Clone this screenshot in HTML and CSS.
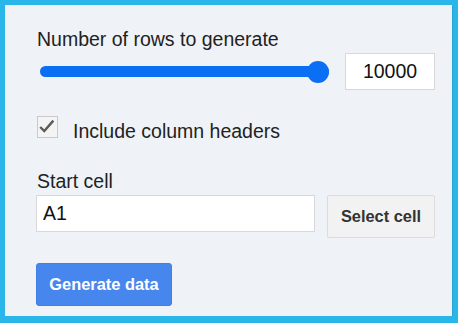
FILE: index.html
```html
<!DOCTYPE html>
<html lang="en">

<head>
  <meta charset="UTF-8">
  <meta name="viewport" content="width=device-width, initial-scale=1.0">
  <title>Generate data</title>
  <link rel="stylesheet" href="styles.css">
</head>

<body>

  <div class="panel">

    <!-- Row count -->
    <label class="field-label" for="rows">Number of rows to generate</label>
    <div class="slider-row">
      <input class="slider" type="range" id="rows" min="1" max="10000" value="10000">
      <input class="rows-input" type="text" value="10000">
    </div>

    <!-- Headers option -->
    <label class="check-row">
      <span class="check-box">
        <svg viewBox="0 0 22 22" width="22" height="22">
          <path d="M3.5,11 L8,15.5 L18,4" />
        </svg>
      </span>
      <span class="check-label">Include column headers</span>
    </label>

    <!-- Start cell -->
    <label class="field-label start-label" for="cell">Start cell</label>
    <div class="cell-row">
      <input class="cell-input" type="text" id="cell" value="A1">
      <button class="btn">Select cell</button>
    </div>

    <button class="btn btn-action">Generate data</button>

  </div>

</body>

</html>
```

FILE: styles.css
```css
/* Page */
body {
  margin: 0;
  background-color: #2ab6e9;
  font-family: "Liberation Sans", Arial, sans-serif;
  color: #222;
}

.panel {
  margin: 5px 0 0 5px;
  width: 447px;
  height: 311px;
  box-sizing: border-box;
  padding: 23px 17px 0 31px;
  background-color: #eff2f7;
  box-shadow: 1px 1px 1px rgba(0, 0, 0, 0.08);
}

.field-label {
  display: block;
  font-size: 19.5px;
  line-height: 22px;
  margin-left: 1px;
}

/* Slider + number */
.slider-row {
  display: flex;
  align-items: center;
  margin-top: 3px;
  height: 37px;
}

.slider {
  -webkit-appearance: none;
  appearance: none;
  width: 289px;
  height: 22px;
  margin: 0 16px 0 4px;
  background: transparent;
}
.slider::-webkit-slider-runnable-track {
  height: 11px;
  border-radius: 6px;
  background-color: #0b6ff3;
}
.slider::-webkit-slider-thumb {
  -webkit-appearance: none;
  width: 22px;
  height: 22px;
  margin-top: -5.5px;
  border-radius: 50%;
  background-color: #0b6ff3;
  border: none;
}

.rows-input {
  width: 90px;
  height: 37px;
  box-sizing: border-box;
  border: 1px solid #d8d8d8;
  background: #fff;
  font-family: inherit;
  font-size: 19.5px;
  color: #111;
  text-align: center;
  padding: 0;
}

/* Checkbox */
.check-row {
  display: flex;
  align-items: flex-start;
  margin-top: 26px;
  margin-left: 1px;
}
.check-box {
  width: 21px;
  height: 22px;
  box-sizing: border-box;
  border: 1px solid #c9c9c9;
  background-color: #f4f4f4;
  display: flex;
}
.check-box svg {
  margin: -1px 0 0 -1px;
}
.check-box path {
  fill: none;
  stroke: #5b5b5b;
  stroke-width: 2.6;
}
.check-label {
  font-size: 19.5px;
  line-height: 22px;
  margin: 4px 0 0 15px;
}

/* Start cell */
.start-label {
  margin-top: 28px;
}
.cell-row {
  display: flex;
  align-items: flex-start;
  gap: 12px;
  margin-top: 3px;
}
.cell-input {
  width: 279px;
  height: 37px;
  box-sizing: border-box;
  border: 1px solid #d8d8d8;
  background: #fff;
  font-family: inherit;
  font-size: 19.5px;
  color: #111;
  padding: 0 0 0 6px;
}

/* Buttons */
.btn {
  height: 43px;
  box-sizing: border-box;
  border: 1px solid #dcdcdc;
  border-radius: 2px;
  background-color: #f2f2f2;
  font-family: inherit;
  font-size: 16.4px;
  font-weight: bold;
  color: #333;
  padding: 0;
  white-space: nowrap;
}
.cell-row .btn {
  width: 108px;
}
.btn-action {
  display: block;
  margin-top: 25px;
  width: 136px;
  background-color: #4787ed;
  border-color: #3f7fe6;
  color: #fff;
  border-radius: 3px;
}
```
